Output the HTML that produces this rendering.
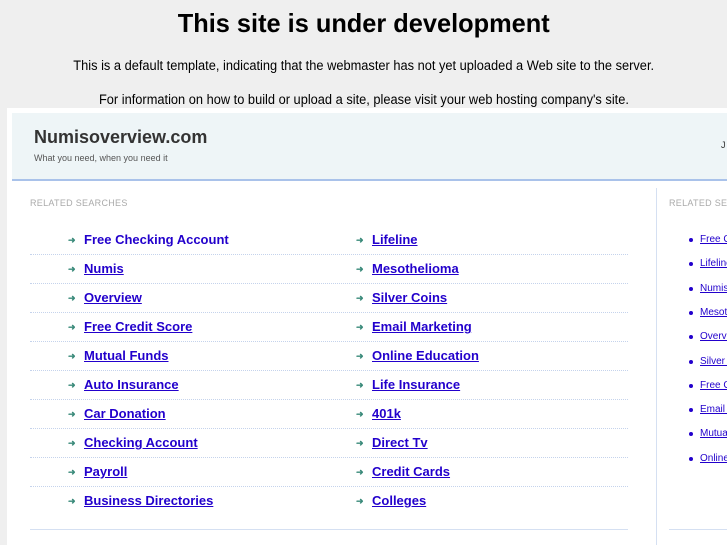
<!DOCTYPE html>
<html><head><meta charset="utf-8"><style>
*{margin:0;padding:0;box-sizing:border-box}
body{width:727px;height:545px;overflow:hidden;background:#efefef;font-family:"Liberation Sans",sans-serif;position:relative}
#wrap{position:absolute;left:0;top:0;width:727px;height:545px;overflow:hidden}
.c{position:absolute;left:0;width:727px;text-align:center;color:#000}
.c span{display:inline-block;transform-origin:center;white-space:nowrap}
#frame{position:absolute;left:7px;top:108px;width:720px;height:437px;background:#fff}
#hdr{position:absolute;left:12px;top:113px;width:715px;height:68px;background:#eef5f7;border-bottom:2px solid #a9c2ea;overflow:hidden}
#hdr h1{position:absolute;left:22px;top:14px;font-size:18px;color:#333;font-weight:bold}
#hdr p{position:absolute;left:22px;top:40px;font-size:9px;color:#555}
#hdr .j{position:absolute;left:709px;top:27px;font-size:9px;color:#333}
.rs{position:absolute;font-size:9px;color:#aaa;letter-spacing:.3px;white-space:nowrap}
.row{position:absolute;height:29px;border-bottom:1px dotted #c5d3ec}
.it{position:absolute;font-size:13px;font-weight:bold;color:#2200cc;text-decoration:underline;white-space:nowrap}
.ar{position:absolute;color:#3a8a7a;font-size:9px;font-weight:bold}
.ri{position:absolute;left:700px;font-size:10px;color:#2200cc;text-decoration:underline;white-space:nowrap}
.bl{position:absolute;left:689px;width:4px;height:4px;border-radius:2px;background:#2200cc}
</style></head><body><div id="wrap">
<div class="c" style="top:8px;font-size:26px;font-weight:bold"><span style="transform:scaleX(.975)">This site is under development</span></div>
<div class="c" style="top:58px;font-size:13.5px"><span style="transform:scaleX(.95)">This is a default template, indicating that the webmaster has not yet uploaded a Web site to the server.</span></div>
<div class="c" style="top:92px;font-size:13.5px"><span style="transform:scaleX(.95)">For information on how to build or upload a site, please visit your web hosting company's site.</span></div>
<div id="frame"></div>
<div id="hdr"><h1>Numisoverview.com</h1><p>What you need, when you need it</p><div class="j">J</div></div>
<div class="rs" style="left:30px;top:198px">RELATED SEARCHES</div>
<div class="rs" style="left:669px;top:198px">RELATED SEARCHES</div>
<div style="position:absolute;left:656px;top:188px;width:1px;height:357px;background:#d5e0f2"></div>
<div style="position:absolute;left:30px;top:529px;width:598px;height:1px;background:#d5e0f2"></div>
<div style="position:absolute;left:669px;top:529px;width:58px;height:1px;background:#d5e0f2"></div>
<div id="rows"></div>
</div>
<script>
var L=["Free Checking Account","Numis","Overview","Free Credit Score","Mutual Funds","Auto Insurance","Car Donation","Checking Account","Payroll","Business Directories"];
var R=["Lifeline","Mesothelioma","Silver Coins","Email Marketing","Online Education","Life Insurance","401k","Direct Tv","Credit Cards","Colleges"];
var RS=["Free Checking Account","Lifeline","Numis","Mesothelioma","Overview","Silver Coins","Free Credit Score","Email Marketing","Mutual Funds","Online Education"];
var h="";
for(var i=0;i<10;i++){var y=226+i*29;
if(i<9)h+='<div class="row" style="left:30px;top:'+y+'px;width:598px"></div>';
h+='<div class="ar" style="left:68px;top:'+(y+9)+'px">&#10140;</div><div class="it" style="left:84px;top:'+(y+6)+'px'+(i==0?';text-decoration:none':'')+'">'+L[i]+'</div>';
h+='<div class="ar" style="left:356px;top:'+(y+9)+'px">&#10140;</div><div class="it" style="left:372px;top:'+(y+6)+'px">'+R[i]+'</div>';
var ry=234+i*24.3;
h+='<div class="bl" style="top:'+(ry+4)+'px"></div><div class="ri" style="top:'+ry+'px">'+RS[i]+'</div>';}
document.getElementById('rows').innerHTML=h;
</script>
</body></html>
